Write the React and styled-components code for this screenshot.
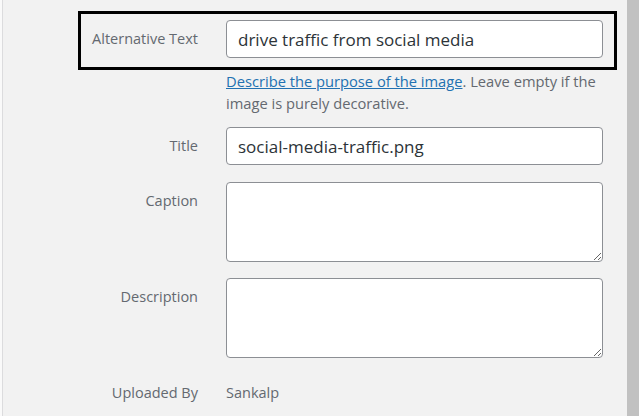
import React from "react";
import styled, { createGlobalStyle } from "styled-components";

const GlobalStyle = createGlobalStyle`
    html, body {
        margin: 0;
        padding: 0;
        background: #f2f2f2;
    }
    body {
        font-family: "Open Sans", "Liberation Sans", sans-serif;
    }
`;

const Page = styled.div`
    display: flex;
    width: 639px;
    height: 416px;
    overflow: hidden;
    background: #f2f2f2;
`;

const EdgeStrip = styled.div`
    width: 2px;
    background: #fafafa;
    border-right: 1px solid #dcdcde;
    flex-shrink: 0;
`;

const Panel = styled.div`
    flex: 1;
    padding: 11px 0 0 75px;
`;

const Scrollbar = styled.div`
    width: 12px;
    flex-shrink: 0;
    background: #c1c1c1;
`;

const Form = styled.div`
    display: flex;
    flex-direction: column;
    width: 539px;
`;

const Row = styled.div`
    display: grid;
    grid-template-columns: 117px 377px;
    column-gap: 28px;
    align-items: start;
    padding-left: 3px;
    margin-top: ${(p) => p.$gap || 0}px;
`;

const HighlightRow = styled(Row)`
    padding: 6px 11px 9px 0;
    border: 3px solid #000;
`;

const Label = styled.label`
    text-align: right;
    font-size: 14.5px;
    line-height: 38px;
    color: #646970;
    white-space: nowrap;
`;

const TextInput = styled.input`
    box-sizing: border-box;
    width: 377px;
    height: 38px;
    margin: 0;
    padding: 0 11px;
    border: 1px solid #8c8f94;
    border-radius: 4px;
    background: #fff;
    font-family: "Open Sans", "Liberation Sans", sans-serif;
    font-size: 17px;
    color: #2c3338;
    outline: none;
`;

const TextArea = styled.textarea`
    box-sizing: border-box;
    display: block;
    width: 377px;
    height: 80px;
    margin: 0;
    padding: 6px 11px;
    border: 1px solid #8c8f94;
    border-radius: 4px;
    background: #fff;
    font-family: "Open Sans", "Liberation Sans", sans-serif;
    font-size: 14px;
    color: #2c3338;
    outline: none;
`;

const Help = styled.p`
    margin: 0;
    padding-left: 148px;
    width: 380px;
    font-size: 14.7px;
    line-height: 22px;
    color: #646970;
`;

const HelpLink = styled.a`
    color: #2271b1;
    text-decoration: underline;
`;

const Value = styled.span`
    font-size: 14.5px;
    line-height: 38px;
    color: #646970;
`;

export default function App() {
    return (
        <>
            <GlobalStyle />
            <Page>
                <EdgeStrip />
                <Panel>
                    <Form>
                        <HighlightRow>
                            <Label>Alternative Text</Label>
                            <TextInput defaultValue="drive traffic from social media" />
                        </HighlightRow>
                        <Help>
                            <HelpLink href="#">Describe the purpose of the image</HelpLink>. Leave empty if the image is purely decorative.
                        </Help>
                        <Row $gap={13}>
                            <Label>Title</Label>
                            <TextInput defaultValue="social-media-traffic.png" />
                        </Row>
                        <Row $gap={17}>
                            <Label>Caption</Label>
                            <TextArea />
                        </Row>
                        <Row $gap={16}>
                            <Label>Description</Label>
                            <TextArea />
                        </Row>
                        <Row $gap={16}>
                            <Label>Uploaded By</Label>
                            <Value>Sankalp</Value>
                        </Row>
                    </Form>
                </Panel>
                <Scrollbar />
            </Page>
        </>
    );
}
